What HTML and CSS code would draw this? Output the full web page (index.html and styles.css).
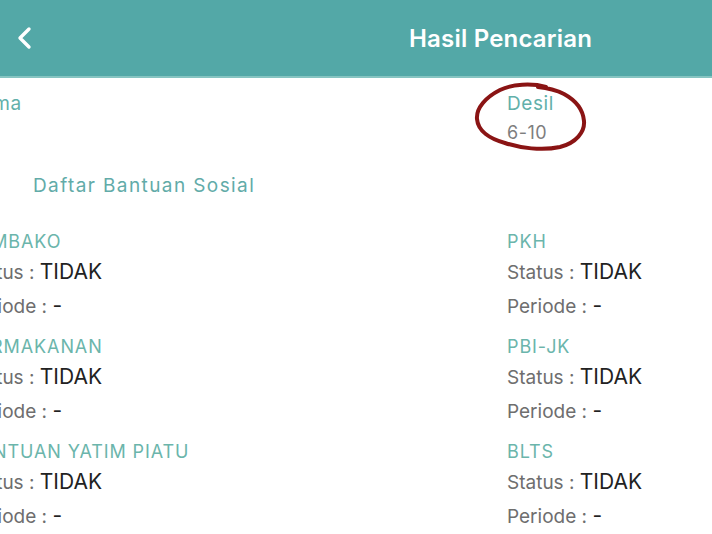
FILE: index.html
```html
<!DOCTYPE html>
<html lang="id">
<head>
<meta charset="utf-8">
<title>Hasil Pencarian</title>
<link rel="stylesheet" href="styles.css">
</head>
<body>
<header class="appbar">
  <span class="back">
    <svg width="20" height="24" viewBox="0 0 20 24"><path d="M14 3 L5 12 L14 21" fill="none" stroke="#ffffff" stroke-width="3.4" stroke-linecap="round" stroke-linejoin="round"/></svg>
  </span>
  <h1 class="title">Hasil Pencarian</h1>
</header>
<main class="main">
  <section class="summary">
    <div class="field">
      <div class="label">Nama</div>
      <div class="value">&nbsp;</div>
    </div>
    <div class="field desil">
      <div class="label">Desil</div>
      <div class="value">6-10</div>
      <svg class="circle" width="120" height="80" viewBox="0 0 120 80"><path d="M74 5 C60 1 40 2 28 8 C14 15 4 26 5 37 C6 49 18 57 33 61 C48 66 70 69 88 65 C104 61 113 50 112 39 C111 27 103 18 92 12 C84 8 76 6 66 5" fill="none" stroke="#8a1414" stroke-width="4" stroke-linecap="round"/></svg>
    </div>
  </section>
  <h2 class="section-title">Daftar Bantuan Sosial</h2>
  <section class="items">
    <div class="item">
      <div class="item-name">SEMBAKO</div>
      <div class="row"><span class="key">Status : </span><span class="val">TIDAK</span></div>
      <div class="row"><span class="key">Periode : </span><span class="val">-</span></div>
    </div>
    <div class="item">
      <div class="item-name">PKH</div>
      <div class="row"><span class="key">Status : </span><span class="val">TIDAK</span></div>
      <div class="row"><span class="key">Periode : </span><span class="val">-</span></div>
    </div>
    <div class="item">
      <div class="item-name">PERMAKANAN</div>
      <div class="row"><span class="key">Status : </span><span class="val">TIDAK</span></div>
      <div class="row"><span class="key">Periode : </span><span class="val">-</span></div>
    </div>
    <div class="item">
      <div class="item-name">PBI-JK</div>
      <div class="row"><span class="key">Status : </span><span class="val">TIDAK</span></div>
      <div class="row"><span class="key">Periode : </span><span class="val">-</span></div>
    </div>
    <div class="item">
      <div class="item-name">BANTUAN YATIM PIATU</div>
      <div class="row"><span class="key">Status : </span><span class="val">TIDAK</span></div>
      <div class="row"><span class="key">Periode : </span><span class="val">-</span></div>
    </div>
    <div class="item">
      <div class="item-name">BLTS</div>
      <div class="row"><span class="key">Status : </span><span class="val">TIDAK</span></div>
      <div class="row"><span class="key">Periode : </span><span class="val">-</span></div>
    </div>
  </section>
</main>
</body>
</html>
```

FILE: styles.css
```css
html, body {
  margin: 0;
  padding: 0;
  background: #ffffff;
}
body {
  width: 712px;
  height: 534px;
  overflow: hidden;
  font-family: Inter, "Noto Sans", sans-serif;
}
.appbar {
  height: 76px;
  background: #53a8a7;
  border-bottom: 2px solid #86c4c1;
  display: flex;
  align-items: center;
}
.back {
  display: flex;
  margin-left: 15px;
}
.title {
  margin: 0 0 0 374px;
  font-size: 24px;
  font-weight: 600;
  color: #ffffff;
  letter-spacing: 0.2px;
}
.main {
  margin-left: -33px;
}
.summary {
  display: grid;
  grid-template-columns: 540px 1fr;
  padding-top: 13px;
}
.field {
  position: relative;
}
.label {
  font-size: 19px;
  line-height: 26px;
  color: #62b0aa;
  letter-spacing: 0.6px;
}
.value {
  margin-top: 3px;
  font-size: 18px;
  line-height: 26px;
  color: #7e7e7e;
  letter-spacing: 0.5px;
}
.circle {
  position: absolute;
  left: -35px;
  top: -9px;
}
.section-title {
  margin: 27px 0 0 66px;
  font-size: 19px;
  line-height: 26px;
  font-weight: 400;
  color: #62aba8;
  letter-spacing: 1.4px;
}
.items {
  display: grid;
  grid-template-columns: 540px 1fr;
  row-gap: 12px;
  margin-top: 30px;
}
.item-name {
  font-size: 18px;
  line-height: 26px;
  color: #6bb5ab;
  letter-spacing: 0.9px;
}
.row {
  height: 33px;
  line-height: 33px;
}
.row + .row {
  height: 34px;
  line-height: 36px;
}
.key {
  font-size: 19px;
  color: #6e6e6e;
}
.val {
  font-size: 21px;
  color: #222222;
}
```
